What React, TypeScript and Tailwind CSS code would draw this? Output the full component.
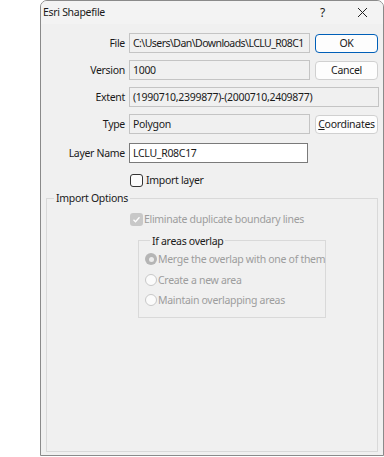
import React from "react";

function Field({
  label,
  value,
  wide,
  white,
  button,
  primary,
  tight,
}: {
  label: string;
  value: string;
  wide?: boolean;
  white?: boolean;
  button?: React.ReactNode;
  primary?: boolean;
  tight?: boolean;
}) {
  return (
    <div className="flex items-center h-[20px]">
      <div className="w-[85px] text-right pr-[1px]">{label}</div>
      <div
        className={
          "ml-[3px] h-[20px] flex items-center px-[3px] border whitespace-nowrap overflow-hidden " +
          (tight ? "tracking-[-0.55px] " : "") +
          (white
            ? "w-[179px] bg-white border-[#7a7a7a]"
            : wide
            ? "w-[250px] bg-[#f0f0f0] border-[#c4c4c4]"
            : "w-[181px] bg-[#f0f0f0] border-[#c4c4c4]")
        }
      >
        {value}
      </div>
      {button && (
        <div
          className={
            "ml-[5px] w-[63px] h-[19px] flex items-center justify-center rounded-[4px] bg-[#fdfdfd] border " +
            (primary ? "border-[#005fb8]" : "border-[#d0d0d0]")
          }
        >
          {button}
        </div>
      )}
    </div>
  );
}

function Radio({ label, checked }: { label: string; checked?: boolean }) {
  return (
    <div className="flex items-center h-[20.5px]">
      {checked ? (
        <div className="w-[12px] h-[12px] rounded-full bg-[#b5b5b5] flex items-center justify-center">
          <div className="w-[5px] h-[5px] rounded-full bg-[#ececec]" />
        </div>
      ) : (
        <div className="w-[12px] h-[12px] rounded-full border border-[#c8c8c8] bg-[#fbfbfb]" />
      )}
      <span className="ml-[1px] text-[#9d9d9d] whitespace-nowrap">{label}</span>
    </div>
  );
}

export default function App() {
  return (
    <div className="w-[384px] h-[457px] bg-white pl-[40px] font-['Noto_Sans',sans-serif] text-[10.5px] tracking-[-0.3px] text-[#1a1a1a] leading-none">
      <div className="w-[344px] h-[456px] border border-[#8a8a8a] rounded-t-[7px] bg-[#f0f0f0] flex flex-col overflow-hidden">
        {/* title bar */}
        <div className="h-[23px] flex items-center bg-[#f3f3f3]">
          <span className="ml-[2px]">Esri Shapefile</span>
          <span className="ml-auto mr-[32px] text-[12px]">?</span>
          <svg width="11" height="11" viewBox="0 0 11 11" className="mr-[15px]">
            <path d="M1 1L10 10M10 1L1 10" stroke="#222" strokeWidth="1" />
          </svg>
        </div>

        <div className="flex flex-col pt-[9px]">
          <div className="flex flex-col gap-[7px]">
            <Field label="File" value="C:\Users\Dan\Downloads\LCLU_R08C1" button="OK" primary tight />
            <Field label="Version" value="1000" button="Cancel" />
            <Field label="Extent" value="(1990710,2399877)-(2000710,2409877)" wide />
            <Field
              label="Type"
              value="Polygon"
              button={
                <span>
                  <span className="underline">C</span>oordinates
                </span>
              }
            />
          </div>
          <div className="mt-[9px]">
            <Field label="Layer Name" value="LCLU_R08C17" white />
          </div>

          <div className="flex items-center ml-[89px] mt-[10px] h-[14px]">
            <div className="w-[13px] h-[13px] border border-[#333] rounded-[3px] bg-[#fbfbfb]" />
            <span className="ml-[3px]">Import layer</span>
          </div>

          <fieldset className="mx-[5px] mt-[6px] h-[259px] border border-[#d9d9d9] px-[5px]">
            <legend className="px-[2px] ml-[2px]">Import Options</legend>
            <div className="flex items-center ml-[78px] mt-[9px] h-[14px]">
              <div className="w-[13px] h-[13px] rounded-[3px] bg-[#c8c8c8] flex items-center justify-center">
                <svg width="9" height="9" viewBox="0 0 9 9">
                  <path d="M1.5 4.8L3.5 6.8L7.5 2.3" fill="none" stroke="#fff" strokeWidth="1.3" />
                </svg>
              </div>
              <span className="ml-[1px] text-[#9d9d9d]">Eliminate duplicate boundary lines</span>
            </div>
            <fieldset className="ml-[86px] mt-[9px] w-[188px] h-[82px] border border-[#d9d9d9] pl-[6px] pt-[3px]">
              <legend className="px-[2px] ml-[5px]">If areas overlap</legend>
              <Radio label="Merge the overlap with one of them" checked />
              <Radio label="Create a new area" />
              <Radio label="Maintain overlapping areas" />
            </fieldset>
          </fieldset>
        </div>
      </div>
    </div>
  );
}
